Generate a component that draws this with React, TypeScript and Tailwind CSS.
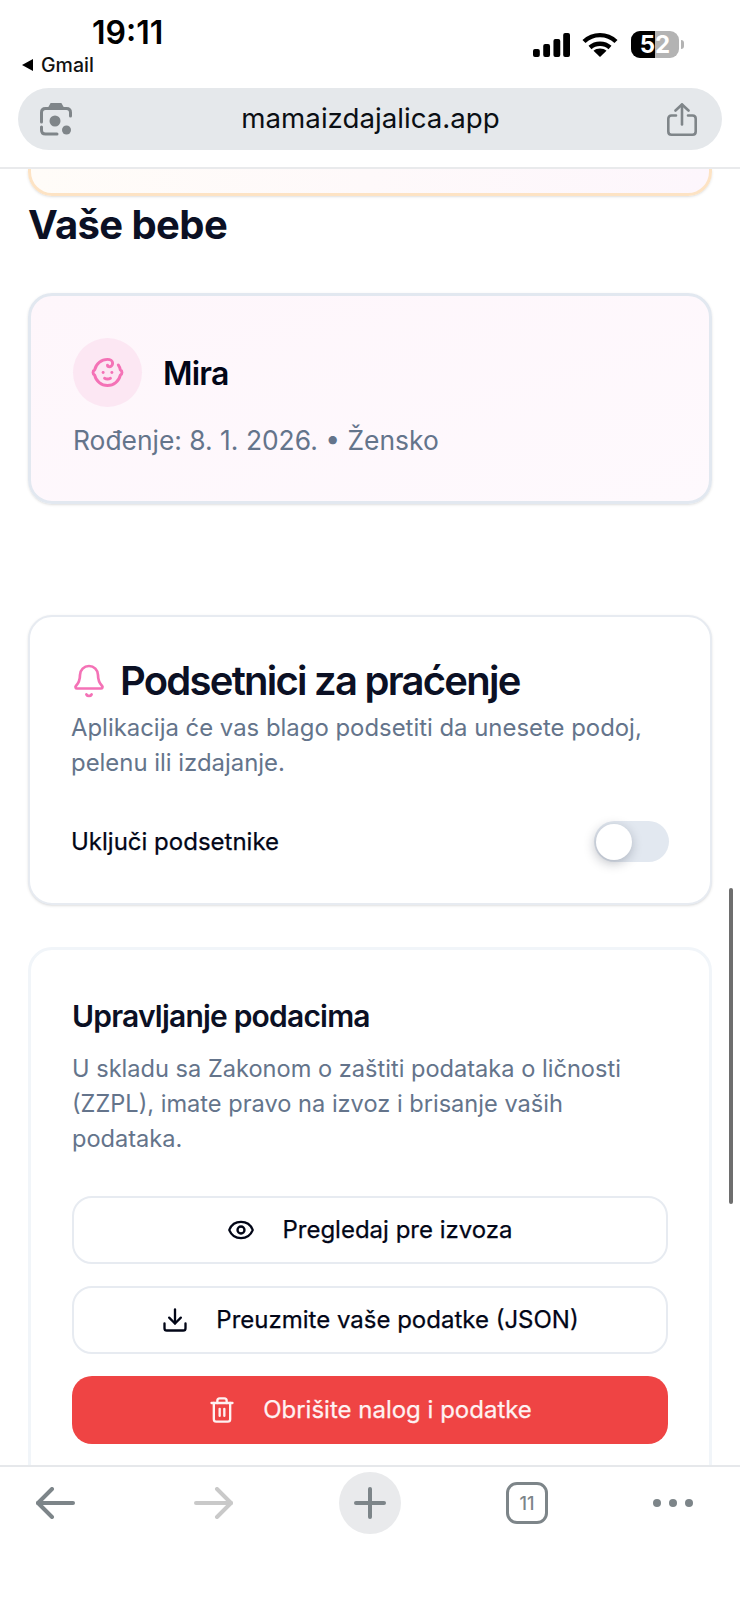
import { Baby, Bell, Eye, Download, Trash2 } from "lucide-react";

function Signal() {
  return (
    <svg width="37" height="24" viewBox="0 0 38 24" fill="#000" preserveAspectRatio="none">
      <rect x="0" y="16" width="7" height="8" rx="2" />
      <rect x="10.5" y="11" width="7" height="13" rx="2" />
      <rect x="21" y="6" width="7" height="18" rx="2" />
      <rect x="31" y="0" width="7" height="24" rx="2" />
    </svg>
  );
}

function Wifi() {
  return (
    <svg width="36" height="25" viewBox="0 0 36 25" fill="none" stroke="#000" strokeWidth="4.4">
      <path d="M2 9.5C11 1 25 1 34 9.5" />
      <path d="M8 15.5C13.5 10.5 22.5 10.5 28 15.5" />
      <path d="M18 25L11.5 18.8C15 15.6 21 15.6 24.5 18.8Z" fill="#000" stroke="none" />
    </svg>
  );
}

function Battery() {
  return (
    <div className="flex items-center">
      <div className="relative flex h-[27px] w-[48px] items-center justify-center overflow-hidden rounded-[9px] bg-[#b3b3b3]">
        <div className="absolute inset-y-0 left-0 w-[24px] bg-black" />
        <span className="relative text-[24px] leading-none font-bold text-white">52</span>
      </div>
      <div className="ml-[2px] h-[9px] w-[3px] rounded-r-full bg-[#b3b3b3]" />
    </div>
  );
}

function LensIcon() {
  return (
    <svg width="32" height="33" viewBox="0 0 32 33" fill="none" stroke="#7f8589" strokeWidth="3" strokeLinecap="round">
      <path d="M1.5 19V9.5C1.5 7 3 5.5 5.5 5.5H26.5C29 5.5 30.5 7 30.5 9.5V13" />
      <path d="M1.5 24V27C1.5 29.5 3 31 5.5 31H17" />
      <path d="M9.5 5L11.5 1.5H20.5L22.5 5" fill="#7f8589" />
      <circle cx="15" cy="18" r="5.5" fill="#7f8589" stroke="none" />
      <circle cx="26.5" cy="27" r="4.5" fill="#7f8589" stroke="none" />
    </svg>
  );
}

function ShareIcon() {
  return (
    <svg width="30" height="33" viewBox="0 0 30 33" fill="none" stroke="#7f8589" strokeWidth="2.6" strokeLinecap="round" strokeLinejoin="round">
      <path d="M9 12.5H4.5C2.5 12.5 1.3 13.7 1.3 15.7V28.5C1.3 30.5 2.5 31.7 4.5 31.7H25.5C27.5 31.7 28.7 30.5 28.7 28.5V15.7C28.7 13.7 27.5 12.5 25.5 12.5H21" />
      <path d="M15 21.5V1.5" />
      <path d="M8.5 7.5L15 1.5L21.5 7.5" />
    </svg>
  );
}

function ArrowLeft({ color, flip }: { color: string; flip?: boolean }) {
  return (
    <svg width="39" height="32" viewBox="0 0 39 32" fill="none" stroke={color} strokeWidth="4" strokeLinecap="round" strokeLinejoin="round" className={flip ? "ml-[119px] -scale-x-100" : ""}>
      <path d="M2 16H37" />
      <path d="M16 2L2 16L16 30" />
    </svg>
  );
}

function ActionButton({ icon, label }: { icon: React.ReactNode; label: string }) {
  return (
    <button className="flex h-[68px] w-full items-center justify-center gap-[27px] rounded-[20px] border-2 border-[#e7ebf1] bg-white text-[24px] font-normal text-[#020617] [-webkit-text-stroke:0.25px_#020617]">
      {icon}
      <span>{label}</span>
    </button>
  );
}

export default function App() {
  return (
    <div className="relative flex h-[1600px] w-[740px] flex-col overflow-hidden bg-white font-['Inter',sans-serif]">
      <header className="h-[169px] shrink-0 border-b-2 border-[#e9eaec] bg-white">
        <div className="flex h-[88px] items-start justify-between pr-[56px] pl-[22px]">
          <div className="pt-[14px]">
            <div className="ml-[70px] text-[32px] leading-[37px] font-semibold text-black">19:11</div>
            <div className="mt-[2px] flex items-center gap-[8px] text-[19.5px] leading-[24px] font-medium text-[#111]">
              <span className="h-0 w-0 border-y-[6px] border-r-[11px] border-y-transparent border-r-black" />
              Gmail
            </div>
          </div>
          <div className="flex items-center pt-[31px]">
            <Signal />
            <div className="mr-[13px] ml-[12px]">
              <Wifi />
            </div>
            <Battery />
          </div>
        </div>
        <div className="mx-[18px] flex h-[62px] items-center justify-between rounded-full bg-[#e5e8eb] pr-[25px] pl-[22px]">
          <LensIcon />
          <span className="ml-[2px] text-[27.7px] font-normal text-[#0b0f14]">mamaizdajalica.app</span>
          <ShareIcon />
        </div>
      </header>

      <main className="min-h-0 flex-1 overflow-hidden bg-white px-[28px]">
        <div className="h-[27px] rounded-b-[24px] border-x-[3px] border-b-[3px] border-[#fde3c4] bg-gradient-to-r from-[#fffcf8] to-[#fdf6fc] shadow-sm" />
        <h2 className="mt-[13px] text-[40px] leading-[32px] font-bold tracking-[-0.6px] text-[#0b1024]">Vaše bebe</h2>

        <section className="mt-[52px] h-[211px] rounded-[24px] border-[3px] border-[#e2e8f0] bg-gradient-to-br from-[#fef6fb] to-[#fef9fd] pt-[42px] pl-[42px] shadow-sm">
          <div className="flex items-center gap-[21px]">
            <div className="flex h-[69px] w-[69px] items-center justify-center rounded-full bg-[#fce7f3]">
              <Baby size={35} color="#f472b6" strokeWidth={2} />
            </div>
            <span className="mt-[2px] text-[32px] font-semibold tracking-[-0.8px] text-[#020617]">Mira</span>
          </div>
          <p className="mt-[15px] text-[26.4px] leading-[36px] text-[#64748b]">Rođenje: 8. 1. 2026. • Žensko</p>
        </section>

        <section className="mt-[111px] h-[290px] rounded-[24px] border-2 border-[#e7ebf1] bg-white px-[42px] pt-[40px] shadow-sm">
          <div className="flex items-center gap-[13px]">
            <Bell size={36} color="#f472b6" strokeWidth={1.8} className="-ml-[1px]" />
            <h2 className="text-[40px] leading-[48px] font-semibold tracking-[-1.75px] text-[#0b1024]">Podsetnici za praćenje</h2>
          </div>
          <p className="mt-[5px] -ml-[1px] text-[23.9px] leading-[35px] text-[#64748b]">
            Aplikacija će vas blago podsetiti da unesete podoj,
            <br />
            pelenu ili izdajanje.
          </p>
          <div className="mt-[41px] -mr-[1px] flex items-center justify-between">
            <span className="-ml-[1px] text-[24px] font-normal text-[#020617] [-webkit-text-stroke:0.25px_#020617]">Uključi podsetnike</span>
            <div className="flex h-[41px] w-[75px] items-center rounded-full bg-[#e2e8f0] pl-[2px]">
              <div className="h-[36px] w-[36px] rounded-full bg-white shadow-[-1px_3px_12px_rgba(15,23,42,0.28)]" />
            </div>
          </div>
        </section>

        <section className="mt-[42px] h-[560px] rounded-[24px] border-[3px] border-[#f1f5f9] bg-white px-[41px] pt-[46px]">
          <h3 className="text-[30px] leading-[40px] font-semibold tracking-[-0.8px] text-[#0b1024]">Upravljanje podacima</h3>
          <p className="mt-[15px] text-[23.6px] leading-[35px] text-[#64748b]">
            U skladu sa Zakonom o zaštiti podataka o ličnosti
            <br />
            (ZZPL), imate pravo na izvoz i brisanje vaših
            <br />
            podataka.
          </p>
          <div className="mt-[40px] flex flex-col gap-[22px]">
            <ActionButton icon={<Eye size={28} color="#020617" />} label="Pregledaj pre izvoza" />
            <ActionButton icon={<Download size={28} color="#020617" />} label="Preuzmite vaše podatke (JSON)" />
            <button className="flex h-[68px] w-full items-center justify-center gap-[27px] rounded-[20px] bg-[#ef4444] text-[24px] font-normal text-[#fef2f2] [-webkit-text-stroke:0.25px_#fef2f2]">
              <Trash2 size={28} color="#fef2f2" />
              <span>Obrišite nalog i podatke</span>
            </button>
          </div>
        </section>
      </main>

      <div className="absolute top-[888px] left-[729px] h-[316px] w-[4px] rounded-full bg-[#6e6e6e]" />

      <footer className="h-[135px] shrink-0 border-t-2 border-[#e6e8eb] bg-white">
        <div className="flex h-[72px] items-center pl-[36px]">
          <ArrowLeft color="#7d8589" />
          <ArrowLeft color="#c9c9c9" flip />
          <div className="ml-[106px] flex h-[62px] w-[62px] items-center justify-center rounded-full bg-[#e9eaec]">
            <svg width="32" height="32" viewBox="0 0 32 32" fill="none" stroke="#7d8589" strokeWidth="4" strokeLinecap="round">
              <path d="M16 2V30" />
              <path d="M2 16H30" />
            </svg>
          </div>
          <div className="ml-[105px] flex h-[42px] w-[42px] items-center justify-center rounded-[11px] border-[3.5px] border-[#7d8589] text-[18px] font-medium text-[#7d8589]">11</div>
          <svg width="40" height="10" viewBox="0 0 40 10" fill="#7d8589" className="ml-[105px]">
            <circle cx="4" cy="5" r="4" />
            <circle cx="20" cy="5" r="4" />
            <circle cx="36" cy="5" r="4" />
          </svg>
        </div>
      </footer>
    </div>
  );
}
